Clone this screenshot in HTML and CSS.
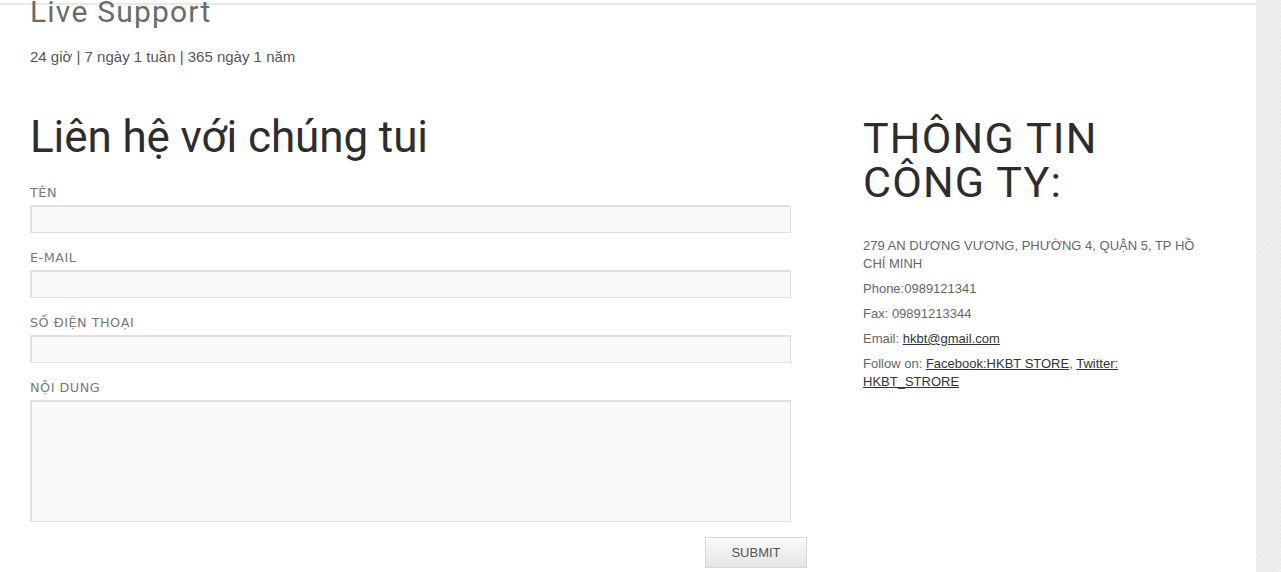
FILE: index.html
```html
<!DOCTYPE html>
<html lang="vi">
<head>
<meta charset="utf-8">
<title>Liên hệ</title>
<link rel="stylesheet" href="styles.css">
</head>
<body>
<div class="shell">
  <main class="page">
    <section class="support">
      <h2 class="support-title">Live Support</h2>
      <p class="support-hours">24 giờ | 7 ngày 1 tuần | 365 ngày 1 năm</p>
    </section>
    <div class="columns">
      <form class="contact">
        <h1 class="contact-title">Liên hệ với chúng tui</h1>
        <label class="field">
          <span class="label">TÊN</span>
          <input class="input" type="text">
        </label>
        <label class="field">
          <span class="label">E-MAIL</span>
          <input class="input" type="text">
        </label>
        <label class="field">
          <span class="label">SỐ ĐIỆN THOẠI</span>
          <input class="input" type="text">
        </label>
        <label class="field">
          <span class="label">NỘI DUNG</span>
          <textarea class="input area"></textarea>
        </label>
        <div class="actions">
          <button class="submit" type="button">SUBMIT</button>
        </div>
      </form>
      <aside class="info">
        <h2 class="info-title">THÔNG TIN CÔNG TY:</h2>
        <p class="info-line">279 AN DƯƠNG VƯƠNG, PHƯỜNG 4, QUẬN 5, TP HỒ CHÍ MINH</p>
        <p class="info-line">Phone:0989121341</p>
        <p class="info-line">Fax: 09891213344</p>
        <p class="info-line">Email: <a href="#">hkbt@gmail.com</a></p>
        <p class="info-line">Follow on: <a href="#">Facebook:HKBT STORE</a>, <a href="#">Twitter: HKBT_STRORE</a></p>
      </aside>
    </div>
  </main>
  <div class="rail"></div>
</div>
</body>
</html>
```

FILE: styles.css
```css
* { box-sizing: border-box; }
html, body { margin: 0; padding: 0; }
body {
  background: #fff;
  font-family: "Liberation Sans", Arial, sans-serif;
  color: #666;
  overflow: hidden;
}
.shell {
  display: flex;
  min-height: 572px;
}
.page {
  flex: 0 0 1256px;
  border-top: 2px solid #e8e8e8;
  margin-top: 3px;
  padding: 0 0 0 30px;
}
.rail {
  flex: 1;
  background: #ededed;
  background-image: repeating-linear-gradient(135deg, rgba(255,255,255,0.18) 0 1px, rgba(0,0,0,0.012) 1px 3px);
}
.support-title {
  margin: -10px 0 0;
  font-family: Roboto, "Open Sans", sans-serif;
  font-weight: 400;
  font-size: 30px;
  line-height: 34px;
  letter-spacing: 1.2px;
  color: #6b6b6b;
}
.support-hours {
  margin: 19px 0 0;
  font-size: 15px;
  line-height: 18px;
  color: #555;
}
.columns {
  display: flex;
  margin-top: 45px;
}
.contact {
  width: 777px;
  display: flex;
  flex-direction: column;
}
.contact-title {
  margin: 0 0 22px;
  font-family: Roboto, "Open Sans", sans-serif;
  font-weight: 400;
  font-size: 44px;
  line-height: 52px;
  letter-spacing: -0.1px;
  color: #2d2d2d;
}
.field {
  display: flex;
  flex-direction: column;
  width: 761px;
  margin-bottom: 17px;
}
.label {
  font-family: "DejaVu Sans", Verdana, sans-serif;
  font-size: 12.8px;
  line-height: 16px;
  letter-spacing: 0.5px;
  color: #777;
  margin-bottom: 4px;
}
.input {
  display: block;
  width: 761px;
  height: 28px;
  border-style: solid;
  border-color: #e0e0e0;
  border-width: 2px 1px 1px 2px;
  background: #fafafa;
  margin: 0;
  font: inherit;
  resize: none;
  outline: none;
}
.area { height: 122px; }
.actions {
  display: flex;
  justify-content: flex-end;
  margin-top: -2px;
}
.submit {
  width: 102px;
  height: 31px;
  border: 1px solid #d6d6d6;
  background: linear-gradient(#fafafa, #e4e4e4);
  font-family: "Liberation Sans", Arial, sans-serif;
  font-size: 13px;
  color: #555;
  padding: 0;
}
.info {
  margin: 5px 0 0 56px;
  width: 345px;
}
.info-title {
  margin: 0 0 33px;
  font-family: Roboto, "Open Sans", sans-serif;
  font-weight: 400;
  font-size: 43px;
  line-height: 44px;
  letter-spacing: 1.2px;
  color: #2d2d2d;
}
.info-line {
  margin: 0 0 7px;
  font-size: 13px;
  line-height: 18px;
  color: #666;
}
.info-line a { color: #333; }
```
